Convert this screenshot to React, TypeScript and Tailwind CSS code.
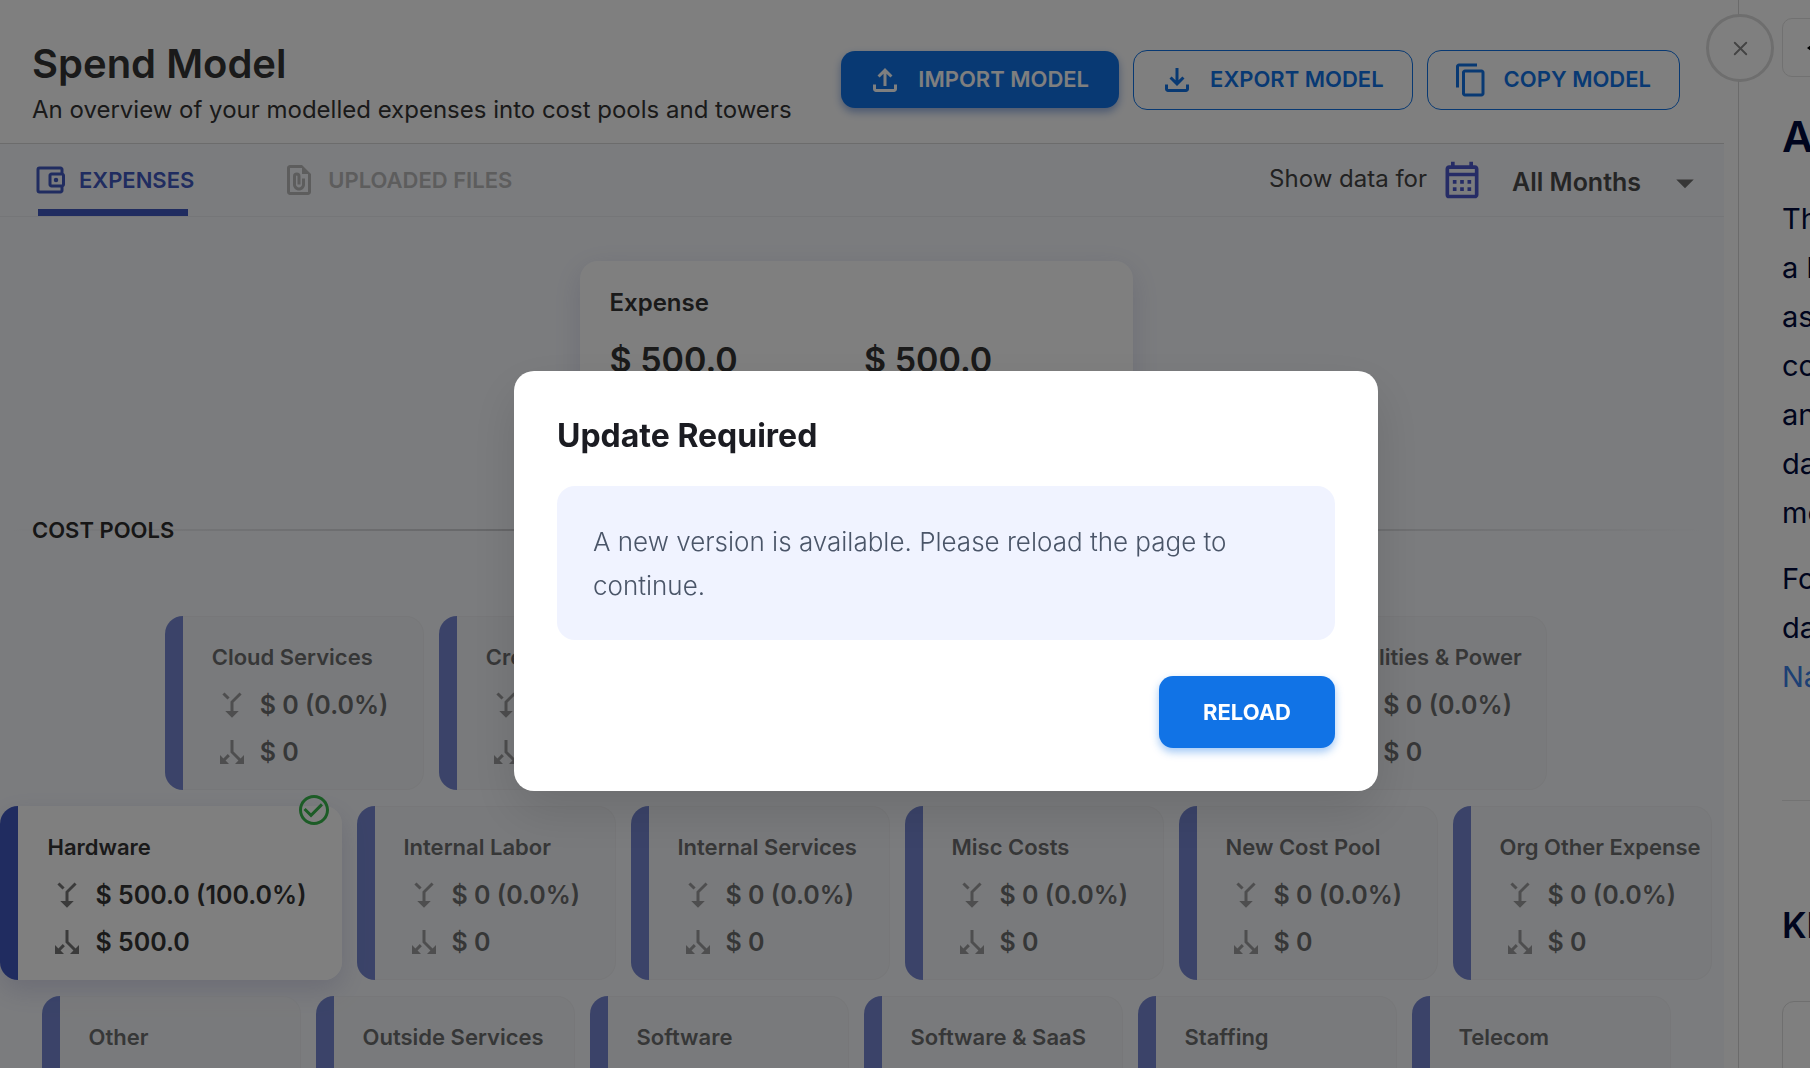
import type { ReactNode } from "react";
import { X } from "lucide-react";
import {
  MdArrowDropDown,
  MdCallMerge,
  MdCallSplit,
  MdCheckCircleOutline,
  MdContentCopy,
  MdOutlineAccountBalanceWallet,
  MdOutlineCalendarMonth,
  MdOutlineFileDownload,
  MdOutlineFilePresent,
  MdOutlineFileUpload,
} from "react-icons/md";

type Pool = { name: string; inflow: string; outflow: string; selected?: boolean };

const empty = (name: string): Pool => ({ name, inflow: "$ 0 (0.0%)", outflow: "$ 0" });

const poolRows: Pool[][] = [
  [
    empty("Cloud Services"),
    empty("Credits"),
    empty("Depreciation"),
    empty("External Labor & Misc"),
    empty("Facilities & Power"),
  ],
  [
    { name: "Hardware", inflow: "$ 500.0 (100.0%)", outflow: "$ 500.0", selected: true },
    empty("Internal Labor"),
    empty("Internal Services"),
    empty("Misc Costs"),
    empty("New Cost Pool"),
    empty("Org Other Expense"),
  ],
  [
    empty("Other"),
    empty("Outside Services"),
    empty("Software"),
    empty("Software & SaaS"),
    empty("Staffing"),
    empty("Telecom"),
  ],
];

function OutlineButton({ icon, children }: { icon: ReactNode; children: ReactNode }) {
  return (
    <button
      type="button"
      className="flex h-[60px] items-center gap-[15px] rounded-[14px] border border-[#1173e6] pr-7 pl-[25px] text-[22px] font-semibold text-[#1173e6]"
    >
      {icon}
      {children}
    </button>
  );
}

function Header() {
  return (
    <header className="flex h-36 shrink-0 items-center justify-between border-b border-[#d8d8d8] bg-white pt-4 pr-11 pl-8">
      <div className="pt-[14px]">
        <h1 className="text-[40px] leading-[46px] font-semibold text-[#343434]">Spend Model</h1>
        <p className="text-2xl leading-[46px] text-[#343434]">
          An overview of your modelled expenses into cost pools and towers
        </p>
      </div>
      <div className="flex items-center gap-[14px]">
        <button
          type="button"
          className="flex h-[57px] items-center gap-[15px] rounded-[14px] bg-[#1173e6] pr-[30px] pl-[26px] text-[22px] font-semibold text-white shadow-[0_4px_8px_rgba(17,80,190,0.45)]"
        >
          <MdOutlineFileUpload size={36} />
          IMPORT MODEL
        </button>
        <OutlineButton icon={<MdOutlineFileDownload size={36} />}>EXPORT MODEL</OutlineButton>
        <OutlineButton icon={<MdContentCopy size={36} />}>COPY MODEL</OutlineButton>
      </div>
    </header>
  );
}

function TabBar() {
  return (
    <div className="flex h-[73px] shrink-0 items-stretch justify-between border-b border-[#ebedf1] pr-[18px] pl-8">
      <div role="tablist" className="flex gap-[87px]">
        <button
          type="button"
          role="tab"
          aria-selected="true"
          className="relative flex items-center gap-[11px] text-[22px] font-semibold text-[#4058c0]"
        >
          <MdOutlineAccountBalanceWallet size={36} />
          EXPENSES
          <span className="absolute inset-x-[6px] bottom-0 h-[7px] bg-[#4058c0]" />
        </button>
        <button
          type="button"
          role="tab"
          aria-selected="false"
          className="flex items-center gap-[11px] text-[22px] font-semibold text-[#bababa]"
        >
          <MdOutlineFilePresent size={36} />
          UPLOADED FILES
        </button>
      </div>
      <div className="flex items-center">
        <label htmlFor="period" className="pb-[2px] text-2xl text-[#444444]">
          Show data for
        </label>
        <MdOutlineCalendarMonth size={44} className="ml-[13px] text-[#4c58cc]" />
        <div className="relative ml-7 flex w-[194px] items-center pt-[6px]">
          <select
            id="period"
            className="w-full appearance-none bg-transparent text-[25px] font-semibold text-[#4a4a4a]"
          >
            <option>All Months</option>
          </select>
          <MdArrowDropDown
            size={42}
            className="pointer-events-none absolute right-0 text-[#6e6e6e]"
          />
        </div>
      </div>
    </div>
  );
}

function ExpenseCard() {
  return (
    <section className="mt-11 w-[553px] rounded-[18px] bg-white px-[30px] pt-[26px] pb-16 text-[#343434] shadow-[0_8px_30px_rgba(70,70,150,0.16)]">
      <h2 className="text-2xl leading-8 font-semibold">Expense</h2>
      <div className="mt-[21px] grid grid-cols-2 gap-4 text-[34px] leading-10 font-semibold">
        <span>$ 500.0</span>
        <span>$ 500.0</span>
      </div>
    </section>
  );
}

function PoolCard({ pool }: { pool: Pool }) {
  const look = pool.selected ? "shadow-[0_10px_28px_rgba(70,70,150,0.18)]" : "opacity-70";
  const body = pool.selected ? "border-white bg-white" : "border-[#ebecef] bg-[#f2f3f6]";
  return (
    <article className={`relative flex h-[174px] min-w-[259px] rounded-[18px] ${look}`}>
      <span className="w-[18px] shrink-0 rounded-l-[18px] bg-[#4058c0]" />
      <div
        className={`flex-1 rounded-r-[18px] border-y border-r pt-[26px] pl-[29px] text-[#343434] ${body}`}
      >
        <h3 className="pr-2 text-[22px] leading-7 font-semibold whitespace-nowrap">{pool.name}</h3>
        <div className="mt-4 ml-[2px] flex items-center gap-[10px] pr-[34px] text-[25px] leading-9 font-semibold whitespace-nowrap">
          <MdCallMerge size={36} className="rotate-180 text-[#767676]" />
          {pool.inflow}
        </div>
        <div className="mt-[11px] ml-[2px] flex items-center gap-[10px] text-[25px] leading-9 font-semibold whitespace-nowrap">
          <MdCallSplit size={36} className="rotate-180 text-[#767676]" />
          {pool.outflow}
        </div>
      </div>
      {pool.selected && (
        <MdCheckCircleOutline
          size={36}
          className="absolute -top-[14px] right-[10px] text-[#38b84c]"
        />
      )}
    </article>
  );
}

function CostPools() {
  return (
    <section className="mt-[71px] flex w-full flex-col items-center">
      <div className="relative flex w-full items-center">
        <span className="absolute inset-x-0 h-[2px] bg-linear-to-r from-transparent via-[#b0b0b4] to-transparent" />
        <h2 className="relative pl-8 text-[22px] leading-[30px] font-semibold text-[#2c2c2c]">
          COST POOLS
        </h2>
      </div>
      <div className="mt-[71px] flex flex-col items-center gap-4">
        {poolRows.map((row) => (
          <div key={row[0].name} className="flex gap-[15px]">
            {row.map((pool) => (
              <PoolCard key={pool.name} pool={pool} />
            ))}
          </div>
        ))}
      </div>
    </section>
  );
}

function HelpPanel() {
  return (
    <aside className="relative w-[72px] shrink-0 border-l border-[#d6d6d6] bg-white pt-[18px] pl-[43px] whitespace-nowrap text-[#000a3c]">
      <button
        type="button"
        aria-label="Close help"
        className="absolute top-[14px] -left-[33px] flex size-[68px] items-center justify-center rounded-full border-3 border-[#dcdcdc] bg-white text-[#888888]"
      >
        <X size={23} strokeWidth={2} />
      </button>
      <button
        type="button"
        aria-label="Back"
        className="flex h-[59px] w-40 items-center rounded-[10px] border border-[#e2e2e2] pl-6 text-black"
      >
        <svg width="24" height="12" viewBox="0 0 24 12" fill="currentColor">
          <path d="M0 6 7 1v4h17v2H7v4z" />
        </svg>
      </button>
      <h2 className="mt-[33px] text-[43px] leading-[52px] font-semibold">About</h2>
      <p className="mt-8 text-[29px] leading-[49px]">
        This page shows
        <br />
        a breakdown of
        <br />
        assigned expenses,
        <br />
        cost pools
        <br />
        and towers from
        <br />
        data in your
        <br />
        model.
      </p>
      <p className="mt-[17px] text-[29px] leading-[49px]">
        For more on
        <br />
        data, see
        <br />
        <a href="#navigation" className="text-[#3a80e8]">
          Navigation
        </a>
      </p>
      <hr className="mt-[99px] w-60 border-[#e6e6e6]" />
      <h2 className="mt-[102px] text-[35px] leading-[44px] font-semibold">KPIs</h2>
      <div className="mt-[54px] h-40 w-60 rounded-[12px] border border-[#dedede]" />
    </aside>
  );
}

function UpdateDialog() {
  return (
    <div className="fixed inset-0 flex items-center justify-center bg-black/50 pt-[94px] pl-[82px]">
      <div
        role="dialog"
        aria-modal="true"
        aria-labelledby="update-title"
        className="flex w-[864px] flex-col rounded-[20px] bg-white px-[43px] pt-11 pb-[43px] shadow-[0_20px_50px_rgba(0,0,0,0.12)]"
      >
        <h2 id="update-title" className="text-[32px] leading-[42px] font-bold text-[#1b1c22]">
          Update Required
        </h2>
        <p className="mt-[29px] rounded-[18px] bg-[#f0f3ff] px-9 pt-[34px] pb-8 text-[26px] leading-[44px] font-light text-[#4a5568]">
          A new version is available. Please reload the page to continue.
        </p>
        <button
          type="button"
          className="mt-9 h-[72px] self-end rounded-[14px] bg-[#1173e6] px-11 text-[22px] font-bold text-white shadow-[0_4px_8px_rgba(17,115,230,0.4)]"
        >
          RELOAD
        </button>
      </div>
    </div>
  );
}

export default function App() {
  return (
    <div className="flex h-screen overflow-hidden bg-white font-['Inter',sans-serif]">
      <main className="mr-[14px] flex min-w-0 flex-1 flex-col bg-[#f7f9fd]">
        <Header />
        <TabBar />
        <div className="flex flex-col items-center pr-3">
          <ExpenseCard />
          <CostPools />
        </div>
      </main>
      <HelpPanel />
      <UpdateDialog />
    </div>
  );
}
